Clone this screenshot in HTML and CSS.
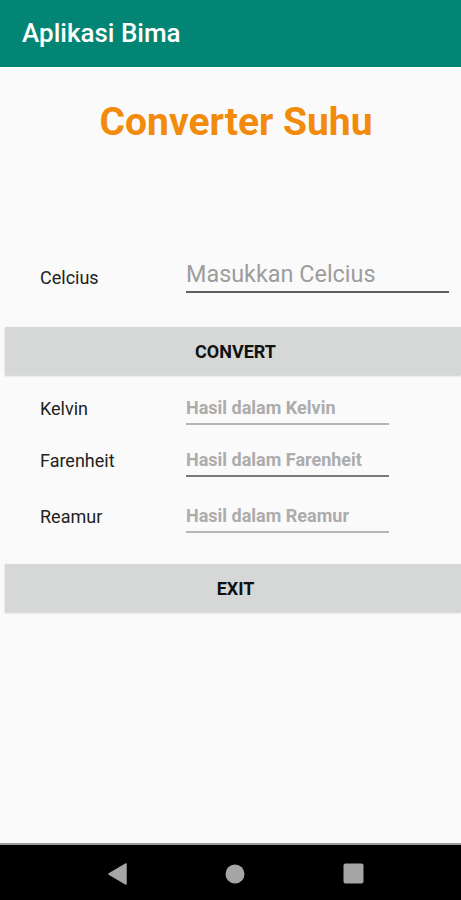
FILE: index.html
```html
<!DOCTYPE html>
<html>
<head>
<meta charset="utf-8">
<link rel="stylesheet" href="styles.css">
</head>
<body>
<div class="screen">
  <header class="appbar"><span class="appbar-title">Aplikasi Bima</span></header>
  <main class="content">
    <h1 class="title">Converter Suhu</h1>
    <div class="row row-input">
      <span class="label">Celcius</span>
      <span class="field field-main">Masukkan Celcius</span>
    </div>
    <div class="btn btn-convert">CONVERT</div>
    <div class="row row-result r1">
      <span class="label">Kelvin</span>
      <span class="field field-result">Hasil dalam Kelvin</span>
    </div>
    <div class="row row-result r2">
      <span class="label">Farenheit</span>
      <span class="field field-result dark">Hasil dalam Farenheit</span>
    </div>
    <div class="row row-result r3">
      <span class="label">Reamur</span>
      <span class="field field-result">Hasil dalam Reamur</span>
    </div>
    <div class="btn btn-exit">EXIT</div>
  </main>
  <nav class="navbar">
    <svg class="nav-icon" width="20" height="22" viewBox="0 0 20 22"><path d="M19 1 L19 21 L2 11 Z" fill="#a6a6a6" stroke="#a6a6a6" stroke-width="1.5" stroke-linejoin="round"/></svg>
    <svg class="nav-icon" width="20" height="20" viewBox="0 0 20 20"><circle cx="10" cy="10" r="9.5" fill="#a6a6a6"/></svg>
    <svg class="nav-icon" width="21" height="21" viewBox="0 0 21 21"><rect x="0.5" y="0.5" width="20" height="20" rx="2" fill="#a6a6a6"/></svg>
  </nav>
</div>
</body>
</html>
```

FILE: styles.css
```css
* { box-sizing: border-box; }
html, body { margin: 0; padding: 0; }
body {
  font-family: Roboto, "Noto Sans", "Liberation Sans", sans-serif;
  background: #fafafa;
}
.screen {
  width: 461px;
  height: 900px;
  display: flex;
  flex-direction: column;
  overflow: hidden;
}
.appbar {
  height: 67px;
  flex: none;
  background: #038575;
  display: flex;
  align-items: center;
  padding-left: 22px;
  box-shadow: 0 1px 3px rgba(0,0,0,0.2);
}
.appbar-title {
  color: #ffffff;
  font-size: 26px;
  font-weight: 500;
  margin-top: -2px;
}
.content {
  flex: 1;
  background: #fafafa;
  display: flex;
  flex-direction: column;
}
.title {
  margin: 31px 0 0 0;
  height: 48px;
  line-height: 48px;
  text-align: center;
  font-size: 39px;
  font-weight: 700;
  color: #f28b0c;
  padding-left: 11px;
}
.row {
  display: flex;
  align-items: flex-end;
}
.label {
  width: 186px;
  padding-left: 40px;
  color: #222;
  font-size: 18px;
  line-height: 22px;
}
.row-input {
  margin-top: 114px;
}
.row-input .label { padding-bottom: 4px; }
.field-main {
  width: 263px;
  font-size: 23.4px;
  line-height: 28px;
  color: #9d9d9d;
  border-bottom: 2px solid #606060;
  padding-bottom: 3px;
}
.btn {
  margin-left: 5px;
  height: 48px;
  background: #d6d7d7;
  display: flex;
  align-items: center;
  justify-content: center;
  font-weight: 700;
  font-size: 18px;
  color: #111;
  box-shadow: 0 1px 2px rgba(0,0,0,0.18);
  padding-left: 5px;
}
.btn-convert { margin-top: 34px; }
.field-result {
  width: 203px;
  font-size: 18px;
  line-height: 22px;
  font-weight: 700;
  color: #acacac;
  border-bottom: 2px solid #b5b5b5;
  padding-bottom: 4px;
}
.field-result.dark { border-bottom-color: #7a7a7a; }
.row-result .label { padding-bottom: 5px; }
.r1 { margin-top: 22px; }
.r2 { margin-top: 24px; }
.r3 { margin-top: 28px; }
.btn-exit { margin-top: 31px; }
.navbar {
  height: 57px;
  flex: none;
  background: #000;
  border-top: 2px solid #9a9a9a;
  display: flex;
  align-items: center;
  justify-content: center;
  gap: 98px;
  padding-left: 10px;
  padding-top: 2px;
}
```
